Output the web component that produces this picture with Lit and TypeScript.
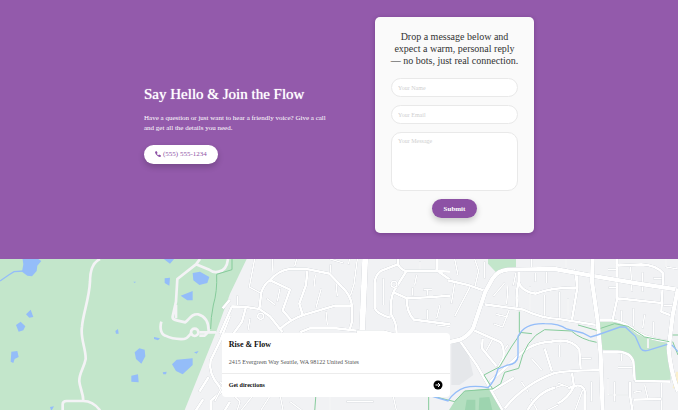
import { LitElement, html, css, svg } from "lit";
import { customElement } from "lit/decorators.js";

// Each map tile is drawn on a 3x grid and placed by its own translate.
const westTile = svg`
  <g transform="translate(0 -4) scale(0.33333)">
    <path class="park" d="M0 0H746L740 12L690 116L648 232L548 480H0Z" />
    <g class="water">
      <path d="M66 0L115 12L124 18L112 32L110 48L96 64L82 62L66 50L70 28Z" />
      <path d="M78 178L92 164L100 186L88 188Z M48 210L62 200L76 214L70 226L56 230Z M34 290L52 288L56 306L44 312L40 324L32 320Z" />
      <path d="M346 228L354 222L356 236L348 236Z M404 292L418 280L434 284L436 304L424 326L408 312Z M394 362L414 358L416 382L394 380Z" />
      <path d="M494 70L510 68L508 92L494 84Z M578 54L600 50L628 66L622 84L598 90L580 76Z M542 122L578 108L578 136L562 136Z" />
      <path d="M462 246L480 250L474 256L462 252Z M516 328L530 314L578 310L578 330L548 358L528 348Z M582 292L596 288L590 296Z M488 352L500 350L498 358L490 358Z M400 80L408 80L404 84Z M150 456L162 454L154 468Z M486 8L524 10L510 26Z" />
    </g>
    <path class="river" d="M0 78L26 60L42 50L72 48" />
    <path class="road parkroad" d="M300 12C278 22 270 50 270 80C268 130 248 180 246 215C240 250 258 280 257 312C252 340 236 355 238 380C240 400 250 415 250 438M188 470V448Q188 438 200 438H250C272 438 288 450 300 466" />
    <path class="road parkroad" d="M600 12L588 28L532 72L528 140L518 184Q516 194 530 196L556 202C570 190 576 176 594 178C616 184 626 202 626 228M528 150V190M588 28L628 44Q640 54 656 50Q680 46 684 12M484 200C480 214 480 236 496 242Q520 254 552 252C566 250 570 236 576 232M598 232H648M598 242H614L626 230" />
    <circle class="road parkroad" cx="584" cy="232" r="11" />
    <path class="trail" d="M696 12L696 44L650 58Q652 110 640 150Q632 190 632 222" />
    <path class="road" d="M690 180L662 254L632 316Q624 356 658 394L664 410L634 436V470M626 366L598 410M690 440L672 470M610 432L585 470M690 134L668 160" />
  </g>`;

const middleTile = svg`
  <g transform="translate(220 -4) scale(0.33333)">
    <path class="road minor" d="M104 12L88 96L128 118M158 12L156 54M52 122V150M230 12L224 34M330 12L370 24M412 12L402 88L390 126M348 84L352 124M304 100L288 158M388 12L386 28M578 98V122M610 104H636M622 104V122M622 164V192M650 210L690 214M330 66L332 28" />
    <path class="road minor" d="M180 100L172 140M286 60L282 96M600 20V46M490 70V150M590 60L584 90M660 150L650 190M140 130L166 150M318 170L322 210M90 190L84 225" />
    <path class="road" d="M36 154L78 156L118 162L150 184L188 232M78 156L66 200L40 236M36 154L0 236M118 162L124 112Q134 84 150 76Q176 46 208 42H260L328 56L366 96Q392 120 396 152V200L388 228M150 76L210 104L188 166L212 194M262 48L258 90L238 146L248 180M180 222Q210 194 250 180L344 152H396M240 232L270 220L350 220L420 228" />
    <path class="road" d="M534 12V28Q540 42 556 48L646 48L690 50M534 28L482 48Q466 60 464 84V158Q468 176 512 188M558 50L524 104Q508 132 514 180Q530 202 530 236M520 112L560 130L640 126L690 122M560 130Q560 174 582 194L690 208M650 12V46L690 74" />
    <circle class="road minor" cx="522" cy="88" r="9" />
    <circle class="road minor" cx="122" cy="184" r="9" />
    <path class="road avenue" d="M436 0L426 240" />
    <path class="road main" d="M410 232H490L560 250" />
    <path class="road minor" d="M-16 440L40 330M0 380L60 440L50 470M60 470L100 420M120 470L155 415M190 470L178 410M210 440L250 470M330 425V470M380 440H460M520 425L530 470" />
    <path class="trail" d="M288 415L284 470M626 415V470" />
  </g>`;

const eastTile = svg`
  <g transform="translate(448 -4) scale(0.33333)">
    <path class="park" d="M120 12H204V38L144 52L120 26Z M454 196L500 192L540 212L588 244L664 260L668 374L562 380L554 318Q544 292 520 288L462 284Z" />
    <path class="deep" d="M0 470L22 436L50 408L128 400L166 470Z" />
    <path class="field" d="M56 434H82V470H50Z M94 428L124 426L134 470H92Z" />
    <path class="block" d="M10 268L36 258L62 300L76 360L34 390H10Z" />
    <path class="sand" d="M684 350H694V400H674Z" />
    <path class="road minor" d="M80 12L92 48L80 98M20 84L10 146M66 96L20 184M136 124L170 84M180 90L176 148M196 92L204 52M262 54V80M296 84V50M334 110V194M380 42L386 96M290 120V192M184 164L164 216L136 206M180 186L144 178M246 94V168M480 44H504M482 98H506M548 36L552 110M584 52V110M616 70H642M520 166V208M556 160V214M590 178L584 220M616 200V240M654 12V36L690 42M690 150L646 152" />
    <path class="road minor" d="M334 270V306M398 310H430M346 390L300 404M370 400L330 384M404 404L380 470M600 280V250M510 338H556M590 390L600 432M556 412L580 408M640 382V470M520 290V318M134 252L110 296M166 290L180 270M282 346L250 310M248 430L270 470M330 450L290 470M480 370V420M480 420H540M500 380V440M430 380V440M220 380L240 410M354 12V40M250 12V40M20 12L30 60M110 20V70M360 130V180" />
    <path class="road" d="M0 76L60 90L112 108M74 224L158 262Q170 276 166 310L150 340M104 250L102 280L146 334M36 258L86 330L166 470M126 380L210 304Q250 262 310 260Q370 248 394 284L398 342M290 280L312 350M134 406L198 368M212 50V80Q218 108 262 116Q316 96 388 98M212 80Q202 120 208 156M388 60V98L372 194M110 148L226 164Q280 190 332 192L446 210M508 12V130L494 194M510 130L640 144M504 32L580 28Q626 30 646 56L640 170L672 182M464 290H508Q548 292 556 320L560 376M454 196H494Q536 202 570 234Q610 254 664 260M546 380V420L554 470M556 434L640 432M170 460Q230 386 320 354Q380 344 462 346M372 354L378 394Q360 430 328 446M236 470Q270 410 322 398M360 400Q410 376 412 420V470M560 378L668 380" />
    <path class="road main" d="M0 262L36 254Q64 240 76 218L112 110L134 70Q150 46 180 44L320 42L430 62L560 84L690 104" />
    <path class="road main" d="M434 12L432 80L448 190L458 300L464 470M690 100L674 180L662 280Q666 340 690 410" />
    <path class="trail" d="M214 170V232L252 236M108 360L154 336L190 276L220 232M108 360L134 402L158 386L170 352L212 340Q232 250 290 224L370 228Q400 254 446 262M390 210L446 226M458 220L500 206L540 214L590 246L664 260M674 240H690M674 260L690 300M-60 420L20 440L50 408L134 402" />
    <path class="river" d="M-60 420L0 438Q20 408 50 398Q80 390 120 398Q142 376 150 342L180 330Q208 326 210 304V244Q230 204 290 206Q334 206 356 222L404 234L428 246L448 240L516 216H532L562 244L578 280Q584 290 600 286L658 268M672 270L690 290" />
  </g>`;

@customElement("contact-form")
export class ContactForm extends LitElement {
  static styles = css`
    :host { display: block; }
    .card {
      display: flex; flex-direction: column; align-items: center; gap: 8px;
      box-sizing: border-box; padding: 14px 16px 15px;
      background: #fafafa; border-radius: 5px;
      box-shadow: 0 1px 4px rgb(60 20 80 / 0.35);
    }
    .title {
      margin: 0 0 3px; font-size: 10px; line-height: 12px; font-weight: 400;
      text-align: center; color: #333;
    }
    .title span { display: block; white-space: nowrap; }
    .field {
      display: block; box-sizing: border-box; width: 100%; height: 19px; margin: 0;
      padding: 0 6px; border: 1px solid #e9e9e9; border-radius: 10px;
      background: #fff; color: #333; font: inherit; font-size: 6px; outline: none;
    }
    .field::placeholder { color: #cfcfcf; opacity: 1; }
    .area { height: 59px; padding: 5px 6px; resize: none; }
    .submit {
      height: 19px; padding: 0 12px; border: 0; border-radius: 10px;
      background: #8d52a5; color: #fff; font: inherit; font-size: 7px; font-weight: 700;
      box-shadow: 0 3px 6px rgb(0 0 0 / 0.2);
    }
  `;

  render() {
    return html`
      <form class="card">
        <h2 class="title">
          <span>Drop a message below and</span>
          <span>expect a warm, personal reply</span>
          <span>— no bots, just real connection.</span>
        </h2>
        <input class="field" type="text" aria-label="Your Name" placeholder="Your Name" />
        <input class="field" type="email" aria-label="Your Email" placeholder="Your Email" />
        <textarea class="field area" aria-label="Your Message" placeholder="Your Message"></textarea>
        <button class="submit" type="button">Submit</button>
      </form>
    `;
  }
}

@customElement("location-map")
export class LocationMap extends LitElement {
  static styles = css`
    :host {
      display: grid; grid-template: 1fr / 1fr; background: #f1f2f4;
      overflow: hidden;
    }
    .map { grid-area: 1 / 1; display: block; width: 100%; height: 151px; }
    .park { fill: #c3e6cb; }
    .deep { fill: #b4dfc0; }
    .field { fill: #9dd4af; }
    .block { fill: #e5e7ea; }
    .sand { fill: #fbf0cd; }
    .water { fill: #94bdf9; }
    .river { fill: none; stroke: #94bdf9; stroke-width: 4; }
    .trail { fill: none; stroke: #86cb9b; stroke-width: 3; }
    .road { fill: none; stroke: #fff; stroke-width: 8; stroke-linejoin: round; filter: drop-shadow(0 0 2px #a9afb8); }
    .minor { stroke-width: 5; }
    .parkroad { stroke: #f4f3f6; filter: none; }
    .main { stroke-width: 13; }
    .avenue { stroke-width: 18; }
    .overlay {
      grid-area: 1 / 1; z-index: 1; display: flex; align-items: flex-end;
      justify-content: center; padding: 0 6px 13px 0;
    }
    .place { width: 34%; background: #fff; border-radius: 4px; }
    .about { display: flex; flex-direction: column; gap: 8px; padding: 6px 7px 7px; border-bottom: 1px solid #ececec; }
    .name { margin: 0; font-size: 8px; line-height: 11px; font-weight: 600; color: #111; }
    .address { margin: 0; font-size: 6px; line-height: 8px; color: #555; }
    .directions {
      display: flex; align-items: center; justify-content: space-between;
      padding: 6px 7px 7px; font-size: 6px; line-height: 9px; font-weight: 600;
      color: #111; text-decoration: none;
    }
    .arrow { display: block; width: 10px; height: 10px; }
  `;

  render() {
    return html`
      <svg class="map" viewBox="0 0 678 151" preserveAspectRatio="xMidYMid slice" aria-hidden="true">
        ${westTile} ${middleTile} ${eastTile}
      </svg>
      <div class="overlay">
        <div class="place">
          <div class="about">
            <h3 class="name">Rise &amp; Flow</h3>
            <p class="address">2415 Evergreen Way Seattle, WA 98122 United States</p>
          </div>
          <a class="directions" href="#directions">
            Get directions
            <svg class="arrow" viewBox="0 0 20 20" aria-hidden="true">
              <circle cx="10" cy="10" r="9" fill="#000" />
              <path d="M5 10H14M10 6L14 10L10 14" fill="none" stroke="#fff" stroke-width="2" />
            </svg>
          </a>
        </div>
      </div>
    `;
  }
}

@customElement("app-root")
export class AppRoot extends LitElement {
  static styles = css`
    :host {
      display: block; min-height: 100vh; background: #f1f2f4;
      font-family: "Liberation Serif", "Noto Sans CJK SC", serif;
    }
    .hero {
      display: grid; grid-template-columns: 195px 159px; justify-content: center;
      align-items: center; column-gap: 36px; padding: 17px 0 26px; background: #935aab; color: #fff;
    }
    .intro { display: flex; flex-direction: column; align-items: flex-start; padding-bottom: 2px; }
    .heading {
      margin: 0; font-size: 15px; line-height: 18px; font-weight: 400; white-space: nowrap;
      text-shadow: 0 0 1px currentColor;
    }
    .lead { margin: 10px 0 12px; font-size: 7px; line-height: 10px; }
    .lead span { display: block; white-space: nowrap; }
    .phone {
      display: flex; align-items: center; gap: 2px; height: 19px; padding: 0 11px;
      border-radius: 10px; background: #fff; color: #8d52a5; font-size: 7px;
      text-decoration: none; box-shadow: 0 3px 6px rgb(0 0 0 / 0.2);
    }
    .handset { display: block; width: 6px; height: 6px; }
  `;

  render() {
    return html`
      <section class="hero">
        <div class="intro">
          <h1 class="heading">Say Hello &amp; Join the Flow</h1>
          <p class="lead">
            <span>Have a question or just want to hear a friendly voice? Give a call</span>
            <span>and get all the details you need.</span>
          </p>
          <a class="phone" href="tel:+15555551234">
            <svg class="handset" viewBox="0 0 16 16" aria-hidden="true">
              <path d="M1 1L4 0L7 5L5 7Q6 10 9 11L11 9L16 12L15 15Q12 17 7 13Q1 9 0 4Z" fill="currentColor" />
            </svg>
            (555) 555-1234
          </a>
        </div>
        <contact-form></contact-form>
      </section>
      <location-map></location-map>
    `;
  }
}
